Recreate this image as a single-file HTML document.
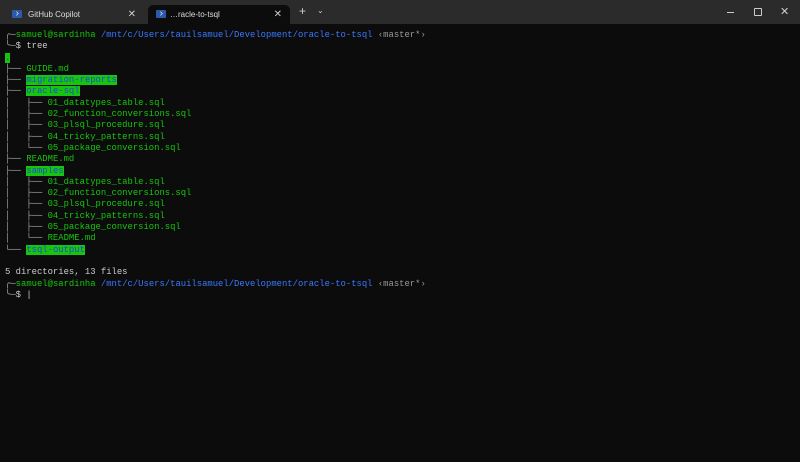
<!DOCTYPE html>
<html><head><style>
body{margin:0;width:800px;height:462px;background:#0c0c0c;overflow:hidden;position:relative;font-family:"Liberation Sans",sans-serif}
.bar{position:absolute;left:0;top:0;width:800px;height:24px;background:#2b2b2b}
.tab{position:absolute;top:5px;height:19px;font-size:8px;color:#ddd;line-height:19px}
.t1{left:4px;width:140px}
.t2{left:148px;width:142px;background:#0c0c0c;border-radius:5px 5px 0 0}
.ic{position:absolute;left:8px;top:5px;width:10px;height:8px;background:#2a5aa8;border-radius:1px}
.ic:after{content:"";position:absolute;left:2px;top:1px;width:4px;height:4px;border-right:1px solid #fff;border-top:1px solid #fff;transform:rotate(45deg) scale(.6)}
.x{position:absolute;right:8px;top:0;font-size:10px;color:#ccc}
.term{position:absolute;left:5px;top:30px;font-family:"Liberation Mono","DejaVu Sans Mono",monospace;font-size:8.9px;line-height:11.3px;color:#cccccc;white-space:pre}
.g{color:#16c60c}.b{color:#3b78ff}.gr{color:#999}
.h{background:#16c60c;color:#2247d8}
.ln{color:#aaa}
</style></head><body>
<div class="bar">
 <div class="tab t1"><div class="ic"></div><span style="position:absolute;left:24px">GitHub Copilot</span><span class="x">✕</span></div>
 <div class="tab t2"><div class="ic"></div><span style="position:absolute;left:22px">…racle-to-tsql</span><span class="x">✕</span></div>
 <div style="position:absolute;left:299px;top:4px;color:#ccc;font-size:12px">+</div>
 <div style="position:absolute;left:317px;top:6px;color:#ccc;font-size:8px">⌄</div>
 <div style="position:absolute;left:727px;top:12px;width:7px;height:1px;background:#ccc"></div>
 <div style="position:absolute;left:754px;top:8px;width:6px;height:6px;border:1px solid #ccc;border-radius:1px"></div>
 <div style="position:absolute;left:780px;top:5px;color:#ccc;font-size:11px">✕</div>
</div>
<div class="term"><span class="ln">╭─</span><span class="g">samuel@sardinha</span> <span class="b">/mnt/c/Users/tauilsamuel/Development/oracle-to-tsql</span> <span class="gr">‹master*›</span>
<span class="ln">╰─</span>$ tree
<span class="h">.</span>
<span class="ln">├── </span><span class="g">GUIDE.md</span>
<span class="ln">├── </span><span class="h">migration-reports</span>
<span class="ln">├── </span><span class="h">oracle-sql</span>
<span class="ln">│   ├── </span><span class="g">01_datatypes_table.sql</span>
<span class="ln">│   ├── </span><span class="g">02_function_conversions.sql</span>
<span class="ln">│   ├── </span><span class="g">03_plsql_procedure.sql</span>
<span class="ln">│   ├── </span><span class="g">04_tricky_patterns.sql</span>
<span class="ln">│   └── </span><span class="g">05_package_conversion.sql</span>
<span class="ln">├── </span><span class="g">README.md</span>
<span class="ln">├── </span><span class="h">samples</span>
<span class="ln">│   ├── </span><span class="g">01_datatypes_table.sql</span>
<span class="ln">│   ├── </span><span class="g">02_function_conversions.sql</span>
<span class="ln">│   ├── </span><span class="g">03_plsql_procedure.sql</span>
<span class="ln">│   ├── </span><span class="g">04_tricky_patterns.sql</span>
<span class="ln">│   ├── </span><span class="g">05_package_conversion.sql</span>
<span class="ln">│   └── </span><span class="g">README.md</span>
<span class="ln">└── </span><span class="h">tsql-output</span>

5 directories, 13 files
<span class="ln">╭─</span><span class="g">samuel@sardinha</span> <span class="b">/mnt/c/Users/tauilsamuel/Development/oracle-to-tsql</span> <span class="gr">‹master*›</span>
<span class="ln">╰─</span>$ <span style="color:#ccc">|</span></div>
</body></html>
